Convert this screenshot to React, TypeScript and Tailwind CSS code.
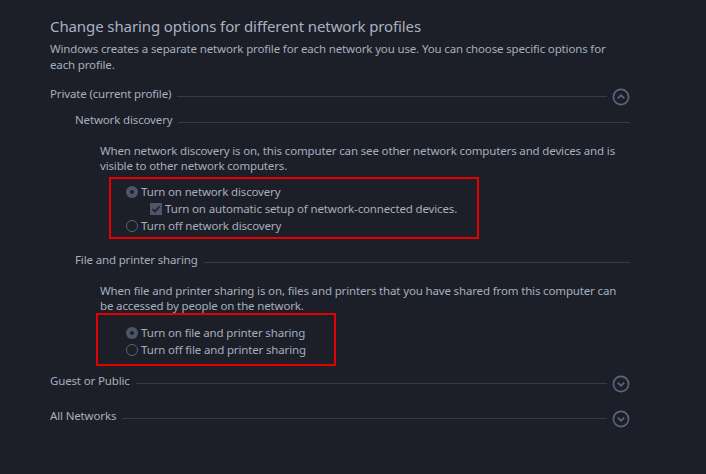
import React from "react";

const font = { fontFamily: '"Noto Sans", "Open Sans", sans-serif' };

function CircleChevron({ up }: { up?: boolean }) {
  return (
    <svg width="18" height="18" viewBox="0 0 18 18" className="shrink-0">
      <circle cx="9" cy="9" r="7.6" fill="none" stroke="#5c667f" strokeWidth="1.6" />
      {up ? (
        <path d="M5.8 10.4 L9 7.2 L12.2 10.4" fill="none" stroke="#5c667f" strokeWidth="1.7" />
      ) : (
        <path d="M5.8 7.6 L9 10.8 L12.2 7.6" fill="none" stroke="#5c667f" strokeWidth="1.7" />
      )}
    </svg>
  );
}

function Radio({ checked, label }: { checked?: boolean; label: string }) {
  return (
    <div className="flex items-center h-[17px]">
      <span
        className={
          "w-[12px] h-[12px] rounded-full flex items-center justify-center shrink-0 " +
          (checked ? "bg-[#4f5566]" : "border-[1.5px] border-[#5a6070]")
        }
      >
        {checked && <span className="w-[4px] h-[4px] rounded-full bg-[#1c1f28]" />}
      </span>
      <span className="ml-[3px] whitespace-nowrap">{label}</span>
    </div>
  );
}

function Check({ label }: { label: string }) {
  return (
    <div className="flex items-center h-[17px] pl-[24px]">
      <span className="w-[12px] h-[12px] bg-[#4f5566] flex items-center justify-center shrink-0">
        <svg width="10" height="10" viewBox="0 0 10 10">
          <path d="M1.5 5.2 L4 7.6 L8.6 2.2" fill="none" stroke="#1c1f28" strokeWidth="1.6" />
        </svg>
      </span>
      <span className="ml-[3px] whitespace-nowrap">{label}</span>
    </div>
  );
}

function HeadRow({ label, icon }: { label: string; icon?: "up" | "down" }) {
  return (
    <div className="flex items-center h-[20px]">
      <span className="whitespace-nowrap">{label}</span>
      <div className="flex-1 h-px bg-[#353a47] ml-[6px] mt-[5px]" />
      {icon && (
        <div className="ml-[5px] mt-[5px]">
          <CircleChevron up={icon === "up"} />
        </div>
      )}
    </div>
  );
}

export default function App() {
  return (
    <div
      className="w-[706px] h-[474px] bg-[#1c1f28] text-[#a7aebd] overflow-hidden text-[11.5px] leading-[16px] tracking-[-0.15px]"
      style={font}
    >
      <div className="pl-[50px] w-[630px] pt-[14px]">
        <div className="text-[15px] leading-[24px] tracking-[-0.1px] text-[#aab2c1] h-[24px]">
          Change sharing options for different network profiles
        </div>
        <div className="mt-[3px] leading-[16px]">
          Windows creates a separate network profile for each network you use. You can choose specific options for
          each profile.
        </div>
        <div className="mt-[11px]">
          <HeadRow label="Private (current profile)" icon="up" />
        </div>
        <div className="pl-[25px] mt-[6px]">
          <HeadRow label="Network discovery" />
          <div className="pl-[25px] mt-[12.5px] leading-[15px]">
            When network discovery is on, this computer can see other network computers and devices and is
            visible to other network computers.
          </div>
          <div className="ml-[34px] mt-[4.5px] w-[370px] h-[62px] border-2 border-[#e30000] pl-[15px] pt-[4px]">
            <Radio checked label="Turn on network discovery" />
            <Check label="Turn on automatic setup of network-connected devices." />
            <Radio label="Turn off network discovery" />
          </div>
          <div className="mt-[11px]">
            <HeadRow label="File and printer sharing" />
          </div>
          <div className="pl-[25px] mt-[12.5px] leading-[15px]">
            When file and printer sharing is on, files and printers that you have shared from this computer can
            be accessed by people on the network.
          </div>
          <div className="ml-[21px] mt-[0.5px] w-[240px] h-[53px] border-2 border-[#e30000] pl-[28px] pt-[9px]">
            <Radio checked label="Turn on file and printer sharing" />
            <Radio label="Turn off file and printer sharing" />
          </div>
        </div>
        <div className="mt-[5px]">
          <HeadRow label="Guest or Public" icon="down" />
        </div>
        <div className="mt-[15px]">
          <HeadRow label="All Networks" icon="down" />
        </div>
      </div>
    </div>
  );
}
